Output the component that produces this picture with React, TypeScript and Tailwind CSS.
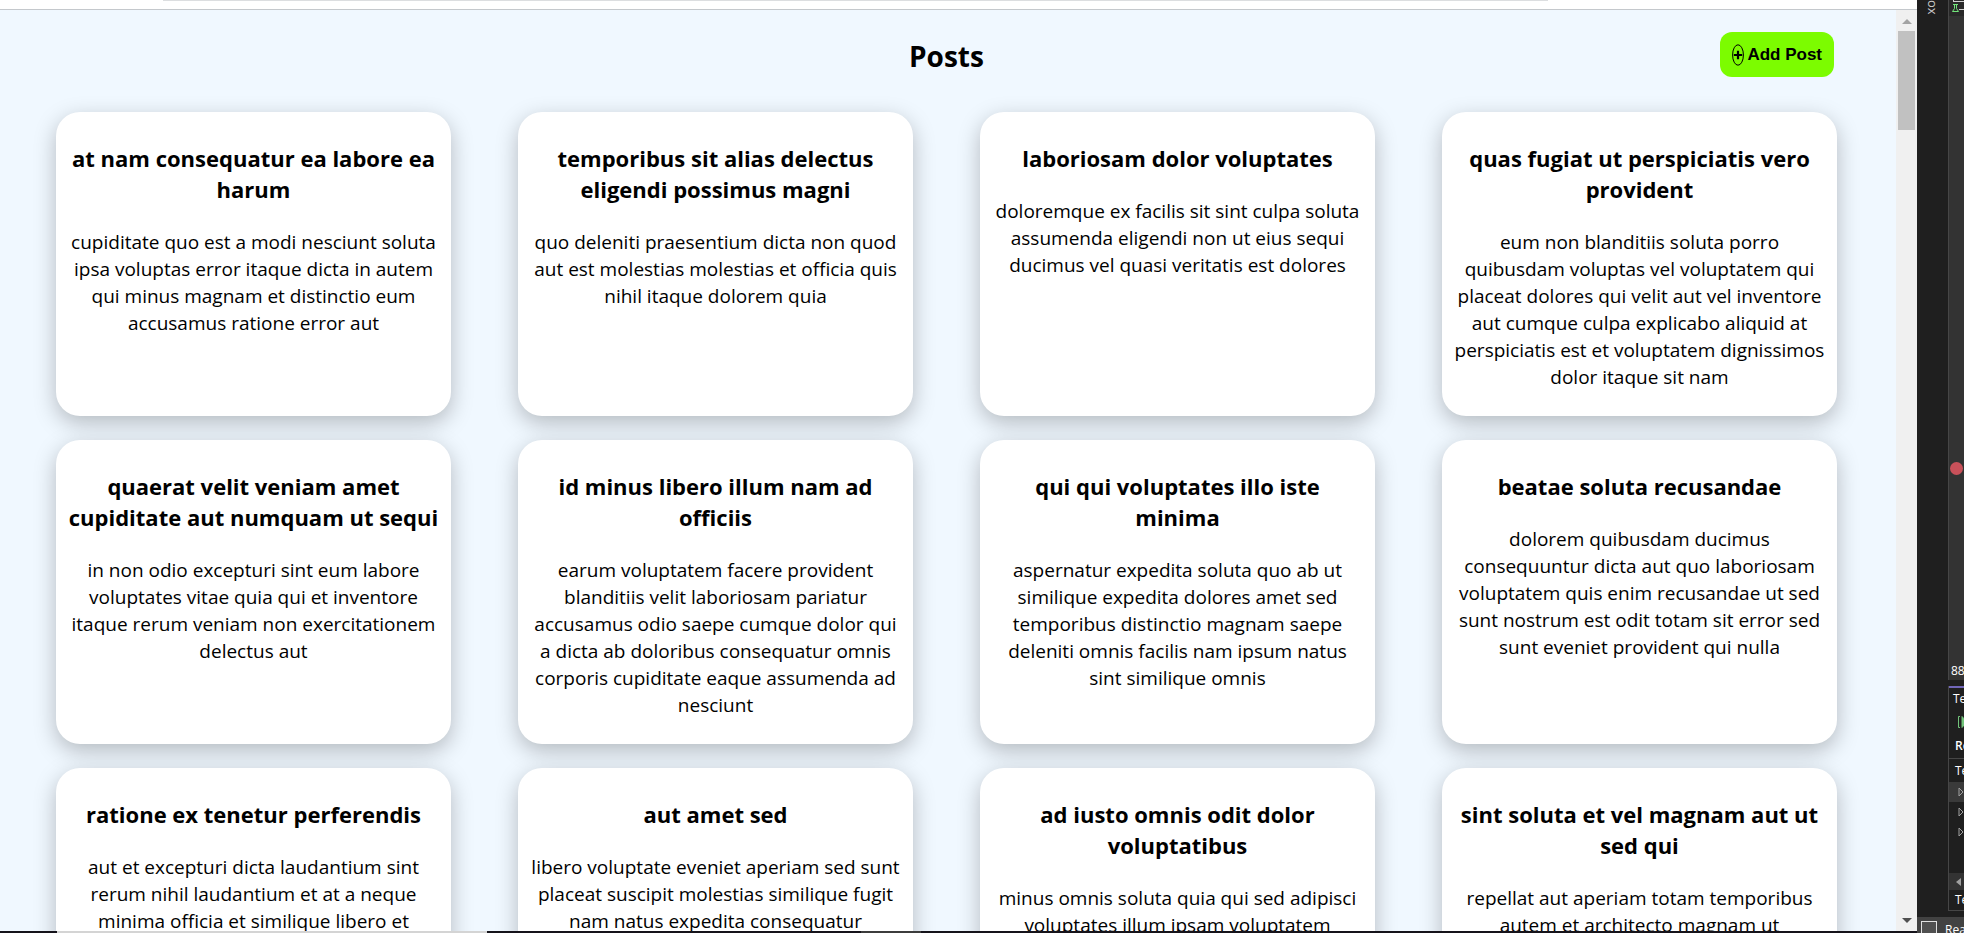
import React from "react";

type Post = { title: string[]; body: string[] };

const posts: Post[] = [
  {
    title: ["at nam consequatur ea labore ea", "harum"],
    body: ["cupiditate quo est a modi nesciunt soluta", "ipsa voluptas error itaque dicta in autem", "qui minus magnam et distinctio eum", "accusamus ratione error aut"],
  },
  {
    title: ["temporibus sit alias delectus", "eligendi possimus magni"],
    body: ["quo deleniti praesentium dicta non quod", "aut est molestias molestias et officia quis", "nihil itaque dolorem quia"],
  },
  {
    title: ["laboriosam dolor voluptates"],
    body: ["doloremque ex facilis sit sint culpa soluta", "assumenda eligendi non ut eius sequi", "ducimus vel quasi veritatis est dolores"],
  },
  {
    title: ["quas fugiat ut perspiciatis vero", "provident"],
    body: ["eum non blanditiis soluta porro", "quibusdam voluptas vel voluptatem qui", "placeat dolores qui velit aut vel inventore", "aut cumque culpa explicabo aliquid at", "perspiciatis est et voluptatem dignissimos", "dolor itaque sit nam"],
  },
  {
    title: ["quaerat velit veniam amet", "cupiditate aut numquam ut sequi"],
    body: ["in non odio excepturi sint eum labore", "voluptates vitae quia qui et inventore", "itaque rerum veniam non exercitationem", "delectus aut"],
  },
  {
    title: ["id minus libero illum nam ad", "officiis"],
    body: ["earum voluptatem facere provident", "blanditiis velit laboriosam pariatur", "accusamus odio saepe cumque dolor qui", "a dicta ab doloribus consequatur omnis", "corporis cupiditate eaque assumenda ad", "nesciunt"],
  },
  {
    title: ["qui qui voluptates illo iste", "minima"],
    body: ["aspernatur expedita soluta quo ab ut", "similique expedita dolores amet sed", "temporibus distinctio magnam saepe", "deleniti omnis facilis nam ipsum natus", "sint similique omnis"],
  },
  {
    title: ["beatae soluta recusandae"],
    body: ["dolorem quibusdam ducimus", "consequuntur dicta aut quo laboriosam", "voluptatem quis enim recusandae ut sed", "sunt nostrum est odit totam sit error sed", "sunt eveniet provident qui nulla"],
  },
  {
    title: ["ratione ex tenetur perferendis"],
    body: ["aut et excepturi dicta laudantium sint", "rerum nihil laudantium et at a neque", "minima officia et similique libero et"],
  },
  {
    title: ["aut amet sed"],
    body: ["libero voluptate eveniet aperiam sed sunt", "placeat suscipit molestias similique fugit", "nam natus expedita consequatur"],
  },
  {
    title: ["ad iusto omnis odit dolor", "voluptatibus"],
    body: ["minus omnis soluta quia qui sed adipisci", "voluptates illum ipsam voluptatem"],
  },
  {
    title: ["sint soluta et vel magnam aut ut", "sed qui"],
    body: ["repellat aut aperiam totam temporibus", "autem et architecto magnam ut"],
  },
];

function Lines({ lines }: { lines: string[] }) {
  return (
    <>
      {lines.map((line) => (
        <span key={line} className="block whitespace-nowrap">
          {line}
        </span>
      ))}
    </>
  );
}

function PostCard({ post }: { post: Post }) {
  return (
    <article className="flex flex-col items-center gap-6 rounded-3xl bg-white pt-[31px] text-center text-black shadow-[0_7px_22px_rgba(0,0,0,0.25)]">
      <h2 className="text-[22px] leading-[31px] font-bold">
        <Lines lines={post.title} />
      </h2>
      <p className="text-[19px] leading-[27px]">
        <Lines lines={post.body} />
      </p>
    </article>
  );
}

function CirclePlus() {
  return (
    <svg viewBox="0 0 12 22" className="h-[22px] w-3" fill="none" stroke="black" aria-hidden="true">
      <ellipse cx="6" cy="11" rx="5.4" ry="10.2" strokeWidth="1" />
      <path d="M1.800 11h8.400M6 6.800v8.400" strokeWidth="2.2" />
    </svg>
  );
}

function Scrollbar() {
  return (
    <div className="flex w-[21px] shrink-0 flex-col items-center bg-[#f0f0f0] pt-[9px] pb-2">
      <svg viewBox="0 0 10 5" className="h-[5px] w-[10px]" aria-hidden="true">
        <path d="M0 5L5 0l5 5z" fill="#a3a3a3" />
      </svg>
      <div className="mt-[7px] h-[99px] w-[17px] bg-[#c1c1c1]" />
      <svg viewBox="0 0 10 5" className="mt-auto h-[5px] w-[10px]" aria-hidden="true">
        <path d="M0 0h10L5 5z" fill="#505050" />
      </svg>
    </div>
  );
}

function Triangle() {
  return (
    <svg viewBox="0 0 8 10" className="ml-[9px] h-[10px] w-2 shrink-0" fill="none" stroke="#a0a0a0" aria-hidden="true">
      <path d="M1 1v8l4-4z" />
    </svg>
  );
}

function EditorEdge() {
  return (
    <aside className="flex w-[47px] shrink-0 flex-col overflow-hidden bg-[#1f1f1f] font-['Open_Sans',sans-serif] text-xs text-white">
      <div className="flex min-h-0 flex-1">
        <div className="flex w-[31px] shrink-0 justify-center">
          <span className="h-[14px] text-[13px] leading-[14px] text-[#c8c8c8] [writing-mode:vertical-rl]">ox</span>
        </div>
        <div className="flex min-w-0 flex-1 flex-col overflow-hidden whitespace-nowrap">
          <div className="flex flex-1 flex-col border-l border-[#464646] bg-[#333333]">
            <svg viewBox="0 0 16 16" className="h-4 w-4 shrink-0 bg-[#292929]" fill="none" aria-hidden="true">
              <path d="M4 1.500h12M4.500 0v2M10 9.500h6" stroke="#d0d0d0" />
              <path d="M4 4.500h5M5.500 4.500v4L3.500 11.500h6L7.500 8.500v-4" stroke="#72e47a" />
            </svg>
            <span className="mt-[446px] ml-px size-[13px] shrink-0 rounded-full bg-[#c9515a]" />
            <span className="mt-auto pl-[2px] leading-[18px]">88</span>
          </div>
          <div className="mt-[6px] flex h-[225px] flex-col border-l border-[#464646]">
            <div className="h-[2px] shrink-0 bg-[#7166b8]" />
            <span className="pl-1 leading-[22px]">Te</span>
            <svg viewBox="0 0 16 12" className="mt-[6px] ml-2 h-3 w-4 shrink-0" fill="none" stroke="#72c47a" aria-hidden="true">
              <path d="M3 .5H1.500v11H3" />
              <path d="M5 .5v11L10 6z" fill="#72c47a" />
            </svg>
            <span className="mt-[6px] border-b border-[#464646] pl-[6px] leading-[24px] font-semibold">Re</span>
            <span className="pl-[6px] leading-[23px]">Te</span>
            <div className="flex h-5 items-center bg-[#3a3a3a]"><Triangle /></div>
            <div className="flex h-5 items-center"><Triangle /></div>
            <div className="flex h-5 items-center"><Triangle /></div>
            <div className="mt-auto flex h-[17px] shrink-0 items-center bg-[#333333]">
              <svg viewBox="0 0 5 8" className="ml-[7px] h-2 w-[5px]" aria-hidden="true">
                <path d="M5 0v8L0 4z" fill="#a0a0a0" />
              </svg>
            </div>
            <span className="border-b border-[#464646] pl-[6px] leading-[20px]">Te</span>
          </div>
        </div>
      </div>
      <div className="mt-[6px] flex h-4 items-start bg-[#424242] pt-1 whitespace-nowrap">
        <span className="ml-1 h-[14px] w-4 shrink-0 border border-[#e0e0e0] bg-[#505050]" />
        <span className="ml-2 leading-[18px]">Rea</span>
      </div>
    </aside>
  );
}

export default function App() {
  return (
    <div className="flex h-screen overflow-hidden bg-[#1f1f1f]">
      <div className="flex min-w-0 flex-1 flex-col">
        <div className="h-[10px] shrink-0 border-b border-[#c4c8cc] bg-white">
          <div className="mr-[369px] ml-[163px] h-px bg-[#dcdee0]" />
        </div>
        <div className="flex min-h-0 flex-1">
          <main className="min-w-0 flex-1 overflow-hidden bg-[aliceblue] pr-[59px] pl-14 font-['Open_Sans','Noto_Sans',sans-serif]">
            <header className="grid h-[102px] grid-cols-[1fr_auto_1fr] items-start pt-[22px]">
              <h1 className="col-start-2 pt-[5px] text-[28px] leading-[38px] font-bold text-black">Posts</h1>
              <button
                type="button"
                className="mr-[3px] flex h-[45px] items-center gap-[3px] justify-self-end rounded-xl bg-[#7cfc00] px-3 font-['Liberation_Sans',Arial,sans-serif] text-[17px] font-bold text-black"
              >
                <CirclePlus />
                Add Post
              </button>
            </header>
            <section className="grid auto-rows-[304px] grid-cols-4 gap-x-[67px] gap-y-6">
              {posts.map((post) => (
                <PostCard key={post.title[0]} post={post} />
              ))}
            </section>
          </main>
          <Scrollbar />
        </div>
        <div className="flex h-[2px] shrink-0 bg-[#15131a] pl-[57px]">
          <div className="w-[430px] bg-[#d4d4d4]" />
          <div className="ml-[374px] w-[60px] bg-[#3c3c3c]" />
        </div>
      </div>
      <EditorEdge />
    </div>
  );
}
